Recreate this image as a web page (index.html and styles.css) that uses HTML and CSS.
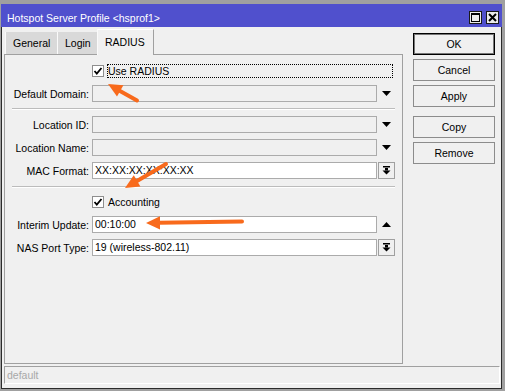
FILE: index.html
```html
<!DOCTYPE html>
<html lang="en">
<head>
<meta charset="utf-8" />
<title>Hotspot Server Profile</title>
<link rel="stylesheet" href="styles.css">
</head>
<body>
	<div class="window">
		<div class="titlebar">
			<span class="title">Hotspot Server Profile &lt;hsprof1&gt;</span>
			<div class="titleButtons">
				<span class="tbtn">
					<svg width="9" height="9" viewBox="0 0 9 9"><rect x="0.5" y="0.5" width="8" height="8" fill="none" stroke="#000" /><rect x="0" y="0" width="9" height="2" fill="#000" /></svg>
				</span>
				<span class="tbtn">
					<svg width="9" height="9" viewBox="0 0 9 9"><path d="M1 1 L8 8 M8 1 L1 8" stroke="#000" stroke-width="2" /></svg>
				</span>
			</div>
		</div>

		<div class="frame">
			<div class="main">
				<div class="leftCol">
					<div class="tabs">
						<span class="tab tabGeneral">General</span>
						<span class="tab tabLogin">Login</span>
						<span class="tab tabRadius selected">RADIUS</span>
					</div>
					<div class="panel">
						<div class="checkRow first">
							<span class="checkbox checked">
								<svg width="10" height="10" viewBox="0 0 10 10"><path d="M1.5 5 L3.8 7.6 L8.5 2" fill="none" stroke="#000" stroke-width="1.8" /></svg>
							</span>
							<span class="checkLabel focus">Use RADIUS</span>
						</div>
						<div class="row gap7">
							<span class="lbl">Default Domain:</span>
							<span class="field disabled"></span>
							<span class="trigger"><svg width="9" height="5" viewBox="0 0 9 5"><polygon points="0,0 9,0 4.5,5" fill="#000" /></svg></span>
						</div>
						<div class="sep"></div>
						<div class="row gap6">
							<span class="lbl">Location ID:</span>
							<span class="field disabled"></span>
							<span class="trigger"><svg width="9" height="5" viewBox="0 0 9 5"><polygon points="0,0 9,0 4.5,5" fill="#000" /></svg></span>
						</div>
						<div class="row gap6">
							<span class="lbl">Location Name:</span>
							<span class="field disabled"></span>
							<span class="trigger"><svg width="9" height="5" viewBox="0 0 9 5"><polygon points="0,0 9,0 4.5,5" fill="#000" /></svg></span>
						</div>
						<div class="row gap6">
							<span class="lbl">MAC Format:</span>
							<span class="field">XX:XX:XX:XX:XX:XX</span>
							<span class="trigger boxed"><svg width="9" height="9" viewBox="0 0 9 9"><rect x="1" y="0" width="7" height="1.5" fill="#000" /><rect x="3" y="2" width="3" height="2.5" fill="#000" /><polygon points="0.5,4.5 8.5,4.5 4.5,8.5" fill="#000" /></svg></span>
						</div>
						<div class="sep sep2"></div>
						<div class="checkRow gap7">
							<span class="checkbox checked">
								<svg width="10" height="10" viewBox="0 0 10 10"><path d="M1.5 5 L3.8 7.6 L8.5 2" fill="none" stroke="#000" stroke-width="1.8" /></svg>
							</span>
							<span class="checkLabel">Accounting</span>
						</div>
						<div class="row gap7">
							<span class="lbl">Interim Update:</span>
							<span class="field">00:10:00</span>
							<span class="trigger"><svg width="9" height="5" viewBox="0 0 9 5"><polygon points="0,5 9,5 4.5,0" fill="#000" /></svg></span>
						</div>
						<div class="row gap6">
							<span class="lbl">NAS Port Type:</span>
							<span class="field">19 (wireless-802.11)</span>
							<span class="trigger boxed"><svg width="9" height="9" viewBox="0 0 9 9"><rect x="1" y="0" width="7" height="1.5" fill="#000" /><rect x="3" y="2" width="3" height="2.5" fill="#000" /><polygon points="0.5,4.5 8.5,4.5 4.5,8.5" fill="#000" /></svg></span>
						</div>
					</div>
				</div>

				<div class="actions">
					<span class="btn default">OK</span>
					<span class="btn">Cancel</span>
					<span class="btn">Apply</span>
					<span class="btn spaced">Copy</span>
					<span class="btn">Remove</span>
				</div>
			</div>
			<div class="status">default</div>
		</div>
	</div>

	<!-- orange annotation arrows drawn over the dialog -->
	<svg class="notes" width="505" height="391" viewBox="0 0 505 391">
		<g fill="#f86a1c" stroke="#f86a1c">
			<line x1="137" y1="100.5" x2="120" y2="91" stroke-width="4" stroke-linecap="round" />
			<polygon points="108,84 123.4,85.3 117,96.5" stroke="none" />
			<line x1="166" y1="164" x2="137" y2="181" stroke-width="4" stroke-linecap="round" />
			<polygon points="125,188 140.4,186.5 133.8,175.3" stroke="none" />
			<line x1="242" y1="221.5" x2="159" y2="222.8" stroke-width="4" stroke-linecap="round" />
			<polygon points="146,223 160,216.3 160,229.5" stroke="none" />
		</g>
	</svg>
</body>
</html>
```

FILE: styles.css
```css
html {
	background: #a0a0a0;
}

body {
	margin: 0;
	font-family: "Liberation Sans", Arial, sans-serif;
	font-size: 10.5px;
	color: #000;
	position: relative;
}

.window {
	margin: 4px 0 0 1px;
	width: 501px;
}

.titlebar {
	height: 23px;
	background: #5050cd;
	display: flex;
	justify-content: space-between;
	align-items: flex-start;
}

.title {
	color: #fff;
	line-height: 13px;
	padding: 8px 0 0 6px;
}

.titleButtons {
	display: flex;
	gap: 4px;
	margin: 7px 3px 0 0;
}

.tbtn {
	width: 13px;
	height: 13px;
	box-sizing: border-box;
	border: 1px solid #1a1a1a;
	background: #ececec;
	display: flex;
	align-items: center;
	justify-content: center;
}

.frame {
	height: 362px;
	box-sizing: border-box;
	background: #f0f0f0;
	border: 1px solid #2b2b2b;
	border-top: none;
	display: flex;
	flex-direction: column;
}

.main {
	height: 337px;
	display: flex;
}

.leftCol {
	margin-left: 2px;
	padding-top: 2px;
	display: flex;
	flex-direction: column;
}

.tabs {
	height: 25px;
	display: flex;
	align-items: flex-end;
	padding-left: 1px;
}

.tab {
	height: 22px;
	box-sizing: border-box;
	background: #d9d9d9;
	border-left: 1px solid #fafafa;
	padding-left: 7px;
	line-height: 22px;
}

.tabGeneral {
	width: 52px;
}

.tabLogin {
	width: 40px;
}

.tabRadius {
	width: 57px;
}

.tab.selected {
	height: 26px;
	margin-bottom: -1px;
	background: #f0f0f0;
	border-top: 1px solid #fff;
	border-right: 1px solid #a0a0a0;
	line-height: 24px;
	position: relative;
	z-index: 1;
}

.panel {
	width: 399px;
	height: 310px;
	box-sizing: border-box;
	border: 1px solid #a0a0a0;
	display: flex;
	flex-direction: column;
}

.checkRow {
	height: 14px;
	display: flex;
	align-items: center;
	padding-left: 87px;
}

.checkRow.first {
	margin-top: 9px;
}

.checkbox {
	width: 12px;
	height: 12px;
	box-sizing: border-box;
	border: 1px solid #8e8e8e;
	background: #fff;
	display: flex;
	align-items: center;
	justify-content: center;
}

.checkLabel {
	margin-left: 4px;
	line-height: 12px;
}

.checkLabel.focus {
	margin-left: 3px;
	width: 286px;
	height: 14px;
	box-sizing: border-box;
	border: 1px dotted #000;
}

.row {
	height: 17px;
	display: flex;
	align-items: center;
}

.gap6 {
	margin-top: 6px;
}

.gap7 {
	margin-top: 7px;
}

.lbl {
	width: 84px;
	margin-right: 3px;
	text-align: right;
	white-space: nowrap;
}

.field {
	width: 285px;
	height: 17px;
	box-sizing: border-box;
	border: 1px solid #ababab;
	background: #fff;
	padding-left: 2px;
	line-height: 15px;
	margin-right: 1px;
}

.field.disabled {
	background: #f0f0f0;
}

.trigger {
	width: 17px;
	height: 17px;
	box-sizing: border-box;
	display: flex;
	align-items: center;
	justify-content: center;
}

.trigger.boxed {
	border: 1px solid #a0a0a0;
}

.sep {
	margin: 6px 0 0 7px;
	width: 383px;
	height: 2px;
	box-sizing: border-box;
	border-top: 1px solid #bcbcbc;
	border-bottom: 1px solid #fff;
}

.sep2 {
	margin-top: 7px;
}

.actions {
	margin: 6px 0 0 10px;
	display: flex;
	flex-direction: column;
	gap: 4px;
}

.btn {
	width: 82px;
	height: 22px;
	box-sizing: border-box;
	border: 1px solid #8c8c8c;
	background: #f0f0f0;
	text-align: center;
	line-height: 20px;
}

.btn.default {
	border-color: #000;
	box-shadow: inset 0 0 0 1px #777;
}

.btn.spaced {
	margin-top: 5px;
}

.status {
	margin: 2px 1px 4px 2px;
	height: 18px;
	box-sizing: border-box;
	border-top: 1px solid #a0a0a0;
	border-left: 1px solid #a0a0a0;
	border-right: 1px solid #fff;
	border-bottom: 1px solid #fff;
	color: #a8a8a8;
	padding-left: 2px;
	line-height: 16px;
}

.notes {
	position: absolute;
	top: 0;
	left: 0;
	pointer-events: none;
}
```
